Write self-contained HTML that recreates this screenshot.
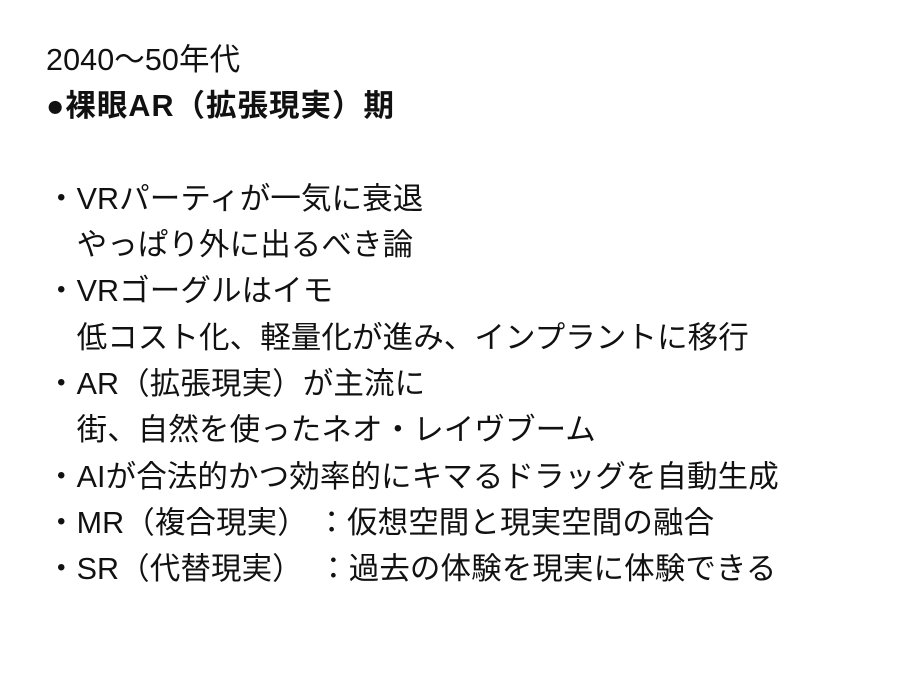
<!DOCTYPE html>
<html><head><meta charset="utf-8"><style>
html,body{margin:0;padding:0;background:#fff;}
body{width:900px;height:675px;overflow:hidden;position:relative;}
.t{position:absolute;left:46px;top:37px;font-family:"Liberation Sans","Noto Sans CJK JP",sans-serif;font-size:30.5px;line-height:46.3px;color:#111;white-space:pre;letter-spacing:0.1px;}
b{font-weight:bold;letter-spacing:1px;}
</style></head><body>
<div class="t">2040〜50年代
<b>●裸眼AR（拡張現実）期</b>

・VRパーティが一気に衰退
　やっぱり外に出るべき論
・VRゴーグルはイモ
　低コスト化、軽量化が進み、インプラントに移行
・AR（拡張現実）が主流に
　街、自然を使ったネオ・レイヴブーム
・AIが合法的かつ効率的にキマるドラッグを自動生成
・MR（複合現実） ：仮想空間と現実空間の融合
・SR（代替現実）　：過去の体験を現実に体験できる</div>
</body></html>
